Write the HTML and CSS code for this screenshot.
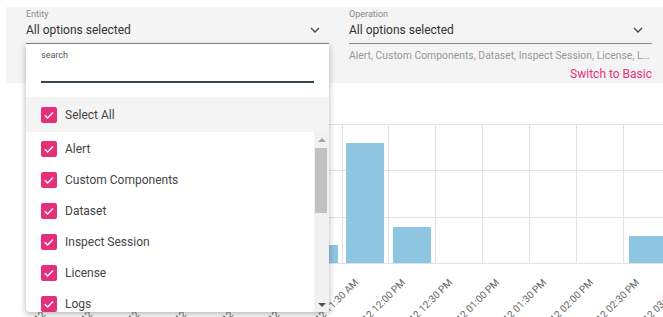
FILE: index.html
```html
<!DOCTYPE html>
<html>
  <head>
    <meta charset="UTF-8">
    <title>Audit Log</title>
    <link rel="stylesheet" href="styles.css">
  </head>
  <body>
  <!-- filter bar -->
  <div class="filters">
    <div class="field">
      <div class="label">Entity</div>
      <div class="select">
        <span>All options selected</span>
        <svg class="chevron" width="10" height="6" viewBox="0 0 10 6"><path d="M1 1l4 4 4-4" fill="none" stroke="#444" stroke-width="1.3"/></svg>
        <!-- open dropdown -->
        <div class="menu">
          <div class="search">
            <div class="label dark">search</div>
            <input class="search-input" type="text" />
          </div>
          <div class="option select-all"><span class="check"><svg width="16" height="16" viewBox="0 0 16 16"><path d="M3.8 8.3l2.8 2.7 5.4-5.6" fill="none" stroke="#fff" stroke-width="1.4"/></svg></span>Select All</div>
          <div class="list">
            <div class="rows">
              <div class="option"><span class="check"><svg width="16" height="16" viewBox="0 0 16 16"><path d="M3.8 8.3l2.8 2.7 5.4-5.6" fill="none" stroke="#fff" stroke-width="1.4"/></svg></span>Alert</div>
              <div class="option"><span class="check"><svg width="16" height="16" viewBox="0 0 16 16"><path d="M3.8 8.3l2.8 2.7 5.4-5.6" fill="none" stroke="#fff" stroke-width="1.4"/></svg></span>Custom Components</div>
              <div class="option"><span class="check"><svg width="16" height="16" viewBox="0 0 16 16"><path d="M3.8 8.3l2.8 2.7 5.4-5.6" fill="none" stroke="#fff" stroke-width="1.4"/></svg></span>Dataset</div>
              <div class="option"><span class="check"><svg width="16" height="16" viewBox="0 0 16 16"><path d="M3.8 8.3l2.8 2.7 5.4-5.6" fill="none" stroke="#fff" stroke-width="1.4"/></svg></span>Inspect Session</div>
              <div class="option"><span class="check"><svg width="16" height="16" viewBox="0 0 16 16"><path d="M3.8 8.3l2.8 2.7 5.4-5.6" fill="none" stroke="#fff" stroke-width="1.4"/></svg></span>License</div>
              <div class="option"><span class="check"><svg width="16" height="16" viewBox="0 0 16 16"><path d="M3.8 8.3l2.8 2.7 5.4-5.6" fill="none" stroke="#fff" stroke-width="1.4"/></svg></span>Logs</div>
              <div class="option"><span class="check"><svg width="16" height="16" viewBox="0 0 16 16"><path d="M3.8 8.3l2.8 2.7 5.4-5.6" fill="none" stroke="#fff" stroke-width="1.4"/></svg></span>Model</div>
            </div>
            <!-- scrollbar -->
            <div class="scrollbar">
              <div class="sb-btn"><span class="arrow-up"></span></div>
              <div class="thumb"></div>
              <div class="sb-rest"></div>
              <div class="sb-btn"><span class="arrow-down"></span></div>
            </div>
          </div>
        </div>
      </div>
    </div>
    <div class="field">
      <div class="label">Operation</div>
      <div class="select">
        <span>All options selected</span>
        <svg class="chevron" width="10" height="6" viewBox="0 0 10 6"><path d="M1 1l4 4 4-4" fill="none" stroke="#444" stroke-width="1.3"/></svg>
      </div>
      <div class="hint">Alert, Custom Components, Dataset, Inspect Session, License, Logs, Model</div>
      <a class="switch">Switch to Basic</a>
    </div>
  </div>

  <!-- chart -->
  <svg class="chart" width="663" height="234" viewBox="0 83 663 234">
    <g stroke="#e2e2e2" stroke-width="1">
      <line x1="40" y1="124.5" x2="663" y2="124.5"/>
      <line x1="40" y1="170.5" x2="663" y2="170.5"/>
      <line x1="40" y1="217.5" x2="663" y2="217.5"/>
      <line x1="40" y1="263.5" x2="663" y2="263.5"/>
      <line x1="60.5" y1="124" x2="60.5" y2="264"/>
      <line x1="107.5" y1="124" x2="107.5" y2="264"/>
      <line x1="154.5" y1="124" x2="154.5" y2="264"/>
      <line x1="201.5" y1="124" x2="201.5" y2="264"/>
      <line x1="248.5" y1="124" x2="248.5" y2="264"/>
      <line x1="295.5" y1="124" x2="295.5" y2="264"/>
      <line x1="342.5" y1="124" x2="342.5" y2="264"/>
      <line x1="388.5" y1="124" x2="388.5" y2="264"/>
      <line x1="435.5" y1="124" x2="435.5" y2="264"/>
      <line x1="482.5" y1="124" x2="482.5" y2="264"/>
      <line x1="529.5" y1="124" x2="529.5" y2="264"/>
      <line x1="576.5" y1="124" x2="576.5" y2="264"/>
      <line x1="623.5" y1="124" x2="623.5" y2="264"/>
    </g>
    <g fill="#8ec6e2">
      <rect x="299" y="245" width="39" height="18"/>
      <rect x="346" y="143" width="38" height="120"/>
      <rect x="393" y="227" width="38" height="36"/>
      <rect x="629" y="236" width="38" height="27"/>
    </g>
    <g class="ticks" text-anchor="end">
      <text transform="translate(78 283) rotate(-45)">2023-05-12 08:30 AM</text>
      <text transform="translate(125 283) rotate(-45)">2023-05-12 09:00 AM</text>
      <text transform="translate(172 283) rotate(-45)">2023-05-12 09:30 AM</text>
      <text transform="translate(219 283) rotate(-45)">2023-05-12 10:00 AM</text>
      <text transform="translate(266 283) rotate(-45)">2023-05-12 10:30 AM</text>
      <text transform="translate(312 283) rotate(-45)">2023-05-12 11:00 AM</text>
      <text transform="translate(359 283) rotate(-45)">2023-05-12 11:30 AM</text>
      <text transform="translate(406 283) rotate(-45)">2023-05-12 12:00 PM</text>
      <text transform="translate(453 283) rotate(-45)">2023-05-12 12:30 PM</text>
      <text transform="translate(500 283) rotate(-45)">2023-05-12 01:00 PM</text>
      <text transform="translate(547 283) rotate(-45)">2023-05-12 01:30 PM</text>
      <text transform="translate(594 283) rotate(-45)">2023-05-12 02:00 PM</text>
      <text transform="translate(640 283) rotate(-45)">2023-05-12 02:30 PM</text>
      <text transform="translate(687 283) rotate(-45)">2023-05-12 03:00 PM</text>
    </g>
  </svg>
  </body>
</html>
```

FILE: styles.css
```css
/* page */
body {
  margin: 0;
  font-family: Roboto, "Liberation Sans", sans-serif;
  background: #fff;
  color: #333;
  overflow: hidden;
}
.filters {
  display: flex;
  gap: 20px;
  height: 76px;
  margin: 7px 0 0 6px;
  padding-left: 20px;
  background-color: #f4f4f4;
}
.field {
  width: 303px;
  flex: none;
}
.label {
  font-size: 9px;
  line-height: 12px;
  color: #888;
  padding-top: 1px;
}
.label.dark {
  color: #555;
}
.select {
  position: relative;
  display: flex;
  align-items: center;
  justify-content: space-between;
  height: 20px;
  padding-bottom: 3px;
  font-size: 12px;
  color: #333;
  border-bottom: 1px solid #8a8a8a;
}
.chevron {
  margin-right: 9px;
}
.hint {
  font-size: 10.4px;
  line-height: 13px;
  margin-top: 5px;
  color: #999;
  white-space: nowrap;
  overflow: hidden;
  text-overflow: ellipsis;
}
.switch {
  display: block;
  text-align: right;
  font-size: 12px;
  line-height: 14px;
  margin-top: 5px;
  color: #e5307b;
  cursor: pointer;
}

/* dropdown */
.menu {
  position: absolute;
  top: 100%;
  left: 0;
  width: 303px;
  margin-top: 1px;
  background: #fff;
  border-radius: 0 0 4px 4px;
  box-shadow: 0 2px 6px rgba(0, 0, 0, 0.3);
  overflow: hidden;
  z-index: 5;
}
.search {
  height: 53px;
  padding: 4px 15px 0;
  box-sizing: border-box;
}
.search-input {
  display: block;
  width: 100%;
  height: 22px;
  box-sizing: border-box;
  border: none;
  border-bottom: 2px solid #37474f;
  background: transparent;
  outline: none;
}
.option {
  display: flex;
  align-items: center;
  gap: 8px;
  height: 31px;
  padding-left: 15px;
  font-size: 12px;
  color: #444;
}
.select-all {
  height: 35px;
  background-color: #f4f4f4;
}
.check {
  display: flex;
  width: 16px;
  height: 16px;
  border-radius: 2px;
  background-color: #e62f7b;
}
.list {
  display: flex;
  height: 180px;
  overflow: hidden;
}
.rows {
  flex: 1;
  padding-top: 1px;
}
.scrollbar {
  display: flex;
  flex-direction: column;
  width: 15px;
  background-color: #f1f1f1;
}
.sb-btn {
  display: flex;
  align-items: center;
  justify-content: center;
  height: 15px;
  flex: none;
}
.arrow-up {
  border-left: 4px solid transparent;
  border-right: 4px solid transparent;
  border-bottom: 4px solid #a3a3a3;
}
.arrow-down {
  border-left: 4px solid transparent;
  border-right: 4px solid transparent;
  border-top: 4px solid #505050;
}
.thumb {
  height: 65px;
  margin: 1px 2px 0 1px;
  background-color: #c1c1c1;
}
.sb-rest {
  flex: 1;
}

/* chart */
.chart {
  display: block;
}
.ticks {
  font-size: 10px;
  fill: #666;
}
```
